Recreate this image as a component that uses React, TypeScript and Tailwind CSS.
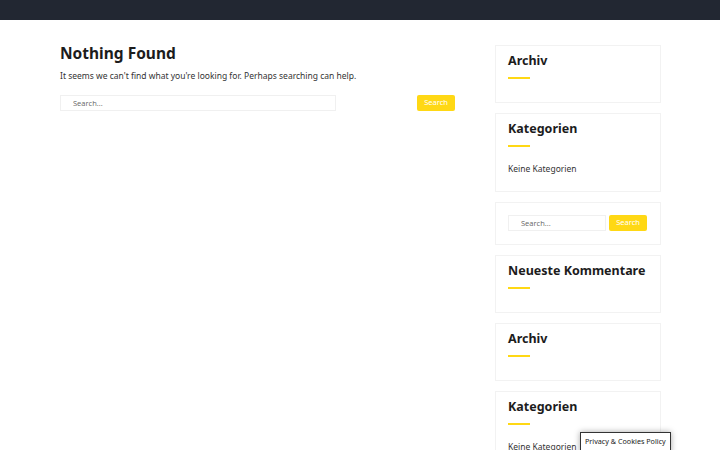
const FONT = "font-['Noto_Sans',sans-serif]";

function SearchForm({ wide }: { wide?: boolean }) {
  return (
    <form className={`flex items-center ${wide ? "justify-between" : "gap-[3px]"}`}>
      <input
        type="text"
        placeholder="Search..."
        className={`${wide ? "w-[276px]" : "w-[98px]"} h-[16px] border border-[#f0f0f0] bg-white pl-[12px] text-[7.5px] text-[#555] placeholder:text-[#666] font-['Open_Sans',sans-serif] outline-none`}
      />
      <button
        type="button"
        className="h-[16px] w-[38px] rounded-[2px] bg-[#ffd814] text-[7.5px] text-white"
      >
        Search
      </button>
    </form>
  );
}

function Widget({ title, children, tall }: { title?: string; children?: React.ReactNode; tall?: boolean }) {
  return (
    <section className={`border border-[#f2f2f2] bg-white px-[12px] pt-[6px] ${tall ? "pb-[16px]" : "pb-[12px]"}`}>
      {title && (
        <>
          <h2 className="whitespace-nowrap text-[12.5px] font-bold leading-[18px] text-[#1c1c1c]">{title}</h2>
          <div className="mt-[7px] h-[2px] w-[22px] bg-[#ffd814]" />
        </>
      )}
      {children}
    </section>
  );
}

export default function App() {
  return (
    <div className={`relative h-[450px] overflow-hidden bg-white ${FONT}`}>
      <header className="h-[20px] bg-[#222732]" />
      <div className="flex gap-[40px] pl-[60px] pt-[25px]">
        <main className="w-[395px]">
          <h1 className="mt-[-2px] text-[15.5px] font-bold leading-[20px] text-[#1c1c1c]">Nothing Found</h1>
          <p className="mt-[6px] text-[8.5px] leading-[13px] text-[#333]">
            It seems we can't find what you're looking for. Perhaps searching can help.
          </p>
          <div className="mt-[13px]">
            <SearchForm wide />
          </div>
        </main>
        <aside className="flex w-[166px] flex-col gap-[10px]">
          <Widget title="Archiv">
            <div className="h-[11px]" />
          </Widget>
          <Widget title="Kategorien" tall>
            <p className="mt-[15px] text-[8.5px] leading-[13px] text-[#333]">Keine Kategorien</p>
          </Widget>
          <section className="border border-[#f2f2f2] bg-white px-[12px] pt-[12px] pb-[13px]">
            <SearchForm />
          </section>
          <Widget title="Neueste Kommentare">
            <div className="h-[11px]" />
          </Widget>
          <Widget title="Archiv">
            <div className="h-[11px]" />
          </Widget>
          <Widget title="Kategorien" tall>
            <p className="mt-[15px] text-[8.5px] leading-[13px] text-[#333]">Keine Kategorien</p>
          </Widget>
        </aside>
      </div>
      <div className="absolute left-[580px] top-[432px] border border-[#333] bg-white px-[4px] pt-[3px] pb-[6px] text-[7.2px] text-[#222] shadow-[0_0_6px_rgba(0,0,0,0.35)]">
        Privacy &amp; Cookies Policy
      </div>
    </div>
  );
}
